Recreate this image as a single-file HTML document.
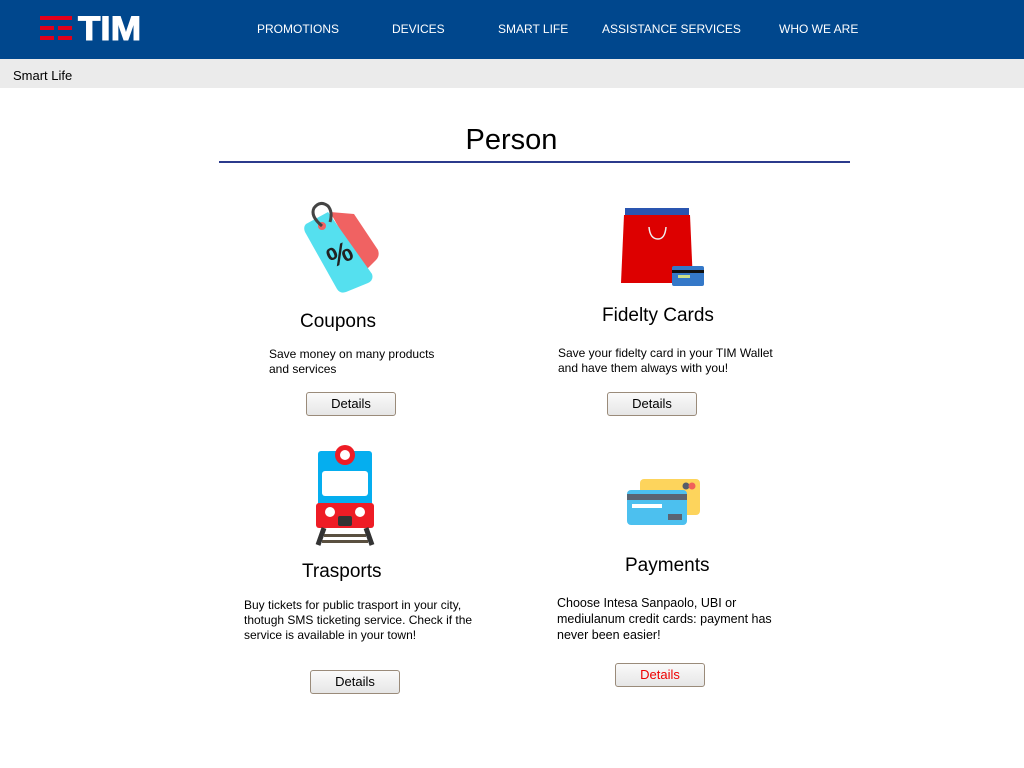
<!DOCTYPE html>
<html><head><meta charset="utf-8"><style>
*{margin:0;padding:0;box-sizing:border-box}
body{width:1024px;height:768px;position:relative;background:#fff;font-family:"Liberation Sans",Arial,sans-serif;overflow:hidden;color:#000}
.a{position:absolute}
.hdr{left:0;top:0;width:1024px;height:59px;background:#00478d}
.nav{top:22px;color:#fff;font-size:12px}
.sub{left:0;top:59px;width:1024px;height:29px;background:#ebebeb;font-size:13px;padding:9px 0 0 13px}
.btn{width:90px;height:24px;border:1px solid #9a8b7a;border-radius:3px;background:linear-gradient(#fafafa,#e6e6e6);font-size:13px;text-align:center;line-height:22px}
.h{font-size:19px}
.p{font-size:12px;line-height:15px}
</style></head><body>
<div class="a hdr"></div>
<svg class="a" style="left:40px;top:16px" width="34" height="26">
<rect x="0" y="0" width="32" height="4" fill="#e3001b"/>
<rect x="0" y="10" width="14" height="4" fill="#e3001b"/><rect x="18" y="10" width="14" height="4" fill="#e3001b"/>
<rect x="0" y="20" width="14" height="4" fill="#e3001b"/><rect x="18" y="20" width="14" height="4" fill="#e3001b"/>
</svg>
<div class="a" style="left:78px;top:10px;color:#fff;font-weight:bold;font-size:34px;letter-spacing:0px;transform:scaleX(1.08);transform-origin:left top;-webkit-text-stroke:1px #fff">TIM</div>
<div class="a nav" style="left:257px">PROMOTIONS</div>
<div class="a nav" style="left:392px">DEVICES</div>
<div class="a nav" style="left:498px">SMART LIFE</div>
<div class="a nav" style="left:602px">ASSISTANCE SERVICES</div>
<div class="a nav" style="left:779px">WHO WE ARE</div>
<div class="a sub">Smart Life</div>
<div class="a" style="left:196px;top:124px;width:631px;text-align:center;font-size:29px">Person</div>
<div class="a" style="left:219px;top:161px;width:631px;height:2px;background:#2b3a8c"></div>

<svg class="a" style="left:300px;top:200px" width="82" height="94">
<path d="M30 12 L54 14 L78 50 Q80 56 76 60 L64 72 Z" fill="#f06262"/>
<path d="M6 24 L28 12 L72 74 Q74 80 68 83 L46 92 Q40 94 37 89 L5 32 Q3 27 6 24Z" fill="#55e0ef"/>
<circle cx="22" cy="26" r="4" fill="#f06262"/>
<path d="M22 26 Q10 16 14 8 Q20 0 28 6 Q33 12 30 22" stroke="#444" stroke-width="3" fill="none"/>
<text x="28" y="64" font-size="28" font-weight="bold" fill="#222" transform="rotate(-25 40 56)" font-family="Liberation Sans">%</text>
</svg>
<div class="a h" style="left:300px;top:311px">Coupons</div>
<div class="a p" style="left:269px;top:347px">Save money on many products<br>and services</div>
<div class="a btn" style="left:306px;top:392px">Details</div>

<svg class="a" style="left:620px;top:207px" width="86" height="80">
<rect x="5" y="1" width="64" height="10" fill="#2a55b0"/>
<path d="M4 8 L70 8 L73 76 L1 76 Z" fill="#dd0000"/>
<path d="M29 20 Q30 32 38 32 Q45 32 46 20" stroke="#eee" stroke-width="1.5" fill="none"/>
<rect x="52" y="59" width="32" height="20" rx="2" fill="#3478c8"/>
<rect x="52" y="63" width="32" height="3" fill="#111"/>
<rect x="58" y="68" width="12" height="3" fill="#cde08a"/>
</svg>
<div class="a h" style="left:602px;top:305px">Fidelty Cards</div>
<div class="a p" style="left:558px;top:346px">Save your fidelty card in your TIM Wallet<br>and have them always with you!</div>
<div class="a btn" style="left:607px;top:392px">Details</div>

<svg class="a" style="left:314px;top:442px" width="64" height="104">
<rect x="4" y="9" width="54" height="56" rx="3" fill="#05aeef"/>
<rect x="8" y="29" width="46" height="25" rx="3" fill="#fff"/>
<circle cx="31" cy="13" r="10" fill="#ee1c25"/><circle cx="31" cy="13" r="5" fill="#fff"/>
<rect x="2" y="61" width="58" height="25" rx="3" fill="#ee1c25"/>
<circle cx="16" cy="70" r="5" fill="#fff"/><circle cx="46" cy="70" r="5" fill="#fff"/>
<rect x="24" y="74" width="14" height="10" rx="2" fill="#333"/>
<path d="M10 86 L4 103 M52 86 L58 103" stroke="#333" stroke-width="5"/>
<rect x="10" y="92" width="42" height="3" fill="#5a5040"/><rect x="8" y="98" width="46" height="3" fill="#5a5040"/>
</svg>
<div class="a h" style="left:302px;top:561px">Trasports</div>
<div class="a p" style="left:244px;top:598px">Buy tickets for public trasport in your city,<br>thotugh SMS ticketing service. Check if the<br>service is available in your town!</div>
<div class="a btn" style="left:310px;top:670px">Details</div>

<svg class="a" style="left:626px;top:478px" width="76" height="48">
<rect x="14" y="1" width="60" height="36" rx="4" fill="#fdd45c"/>
<circle cx="60" cy="8" r="3.5" fill="#555c6a"/><circle cx="66" cy="8" r="3.5" fill="#f0605a"/>
<rect x="1" y="12" width="60" height="35" rx="4" fill="#4cc0ef"/>
<rect x="1" y="16" width="60" height="6" fill="#5a6472"/>
<rect x="6" y="26" width="30" height="4" fill="#fff"/>
<rect x="42" y="36" width="14" height="6" fill="#5a6472"/>
</svg>
<div class="a h" style="left:625px;top:555px">Payments</div>
<div class="a p" style="left:557px;top:595px;font-size:12.5px;line-height:16px">Choose Intesa Sanpaolo, UBI or<br>mediulanum credit cards: payment has<br>never been easier!</div>
<div class="a btn" style="left:615px;top:663px;color:#e00">Details</div>
</body></html>
